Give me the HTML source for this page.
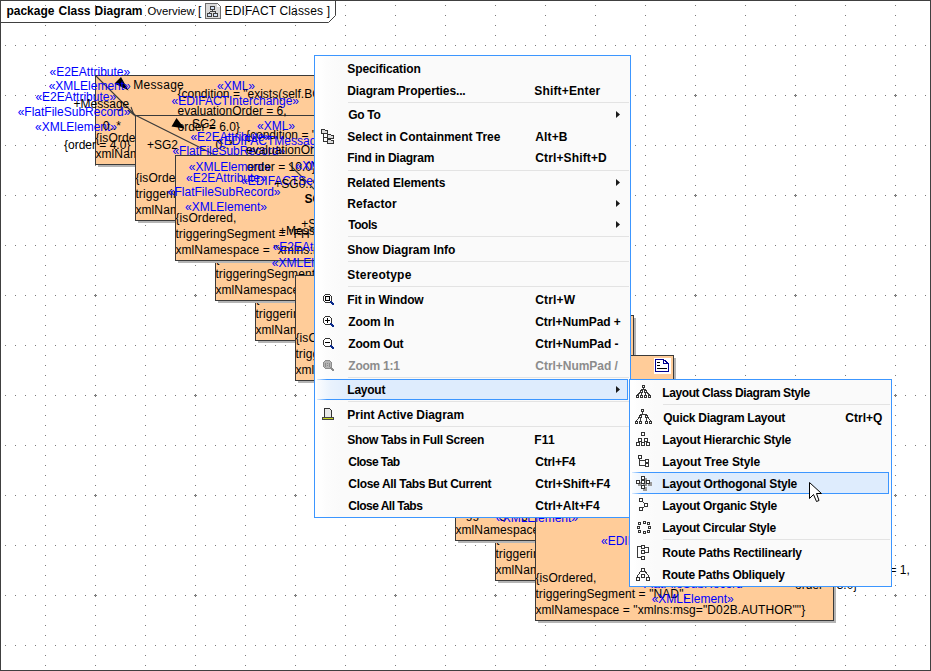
<!DOCTYPE html>
<html><head><meta charset="utf-8"><style>
html,body{margin:0;padding:0;}
body{width:931px;height:671px;position:relative;overflow:hidden;background:#fff;font-family:"Liberation Sans",sans-serif;}
.t{position:absolute;white-space:pre;}
.box{position:absolute;background:#ffcc99;border:1px solid #3a3a3a;box-sizing:border-box;overflow:hidden;}
.sh{position:absolute;background:#b4b4b4;}
.menu{position:absolute;box-sizing:border-box;border:1px solid #3c96ff;background:linear-gradient(to right,#ffffff 0px,#ffffff 3px,#fcfcfc 12px,#fafafa 26px,#fafafa 100%);}
.mi{position:absolute;font-weight:bold;font-size:12px;line-height:12px;color:#000;white-space:pre;}
.sep{position:absolute;height:1px;background:#e3e3e3;}
.hl{position:absolute;box-sizing:border-box;border-right:1px solid #3c96ff;background:linear-gradient(to right,#fbfdff 0px,#e9f2fd 14px,#deecfd 36px,#deecfd 100%);}.hl::before,.hl::after{content:'';position:absolute;left:0;right:-1px;height:1px;background:linear-gradient(to right,rgba(60,150,255,0.15) 0px,#3c96ff 10px,#3c96ff 100%);}.hl::before{top:0}.hl::after{bottom:0}
.arr{position:absolute;width:0;height:0;border-top:4px solid transparent;border-bottom:4px solid transparent;border-left:4px solid #222;}
</style></head><body>

<svg width="931" height="671" style="position:absolute;left:0;top:0" shape-rendering="crispEdges">
<defs>
<pattern id="gv" x="0" y="0" width="50" height="10" patternUnits="userSpaceOnUse"><rect x="45" y="5" width="1" height="1" fill="#7a7a7a"/></pattern>
<pattern id="gh" x="0" y="0" width="10" height="50" patternUnits="userSpaceOnUse"><rect x="5" y="45" width="1" height="1" fill="#7a7a7a"/></pattern>
<pattern id="gc" x="0" y="0" width="100" height="100" patternUnits="userSpaceOnUse"><rect x="94" y="95" width="3" height="1" fill="#7a7a7a"/><rect x="95" y="94" width="1" height="3" fill="#7a7a7a"/></pattern>
</defs>
<rect width="931" height="671" fill="url(#gv)"/>
<rect width="931" height="671" fill="url(#gh)"/>
<rect width="931" height="671" fill="url(#gc)"/>
<rect x="0.5" y="0.5" width="930" height="670" fill="none" stroke="#404040" stroke-width="1"/>
<path d="M0 22.5 H328.5 L335.5 15.5 V0" fill="none" stroke="#404040" stroke-width="1" shape-rendering="auto"/>
</svg>

<div class="t" style="left:6.4px;top:4.64px;font-size:12px;line-height:12px;color:#000;font-weight:bold;">package</div>
<div class="t" style="left:58.5px;top:4.64px;font-size:12px;line-height:12px;color:#000;font-weight:bold;">Class</div>
<div class="t" style="left:94.5px;top:4.64px;font-size:12px;line-height:12px;color:#000;font-weight:bold;">Diagram</div>
<div class="t" style="left:147.5px;top:5.83px;font-size:11.3px;line-height:11.3px;color:#000;">Overview</div>
<div class="t" style="left:198.0px;top:5.24px;font-size:12px;line-height:12px;color:#000;">[</div>
<svg width="17" height="17" style="position:absolute;left:205px;top:3px" shape-rendering="crispEdges">
<path d="M0.5 0.5 H12.5 L15.5 3.5 V15.5 H0.5 Z" fill="#dadada" stroke="#6e6e6e"/>
<path d="M12.5 1 V3.5 H15" fill="#fff" stroke="#fff"/>
<path d="M12.5 0.5 L15.5 3.5" stroke="#6e6e6e" shape-rendering="auto"/>
<path d="M7.5 6.5 V8.5 M4.5 8.5 H10.5 M4.5 8.5 V10.5 M10.5 8.5 V10.5" stroke="#404040"/>
<rect x="5.5" y="3.5" width="4" height="3" fill="#d4e2f6" stroke="#404040"/>
<rect x="2.5" y="10.5" width="4" height="3" fill="#d4e2f6" stroke="#404040"/>
<rect x="8.5" y="10.5" width="4" height="3" fill="#d4e2f6" stroke="#404040"/>
</svg>
<div class="t" style="left:224.5px;top:5.24px;font-size:12px;line-height:12px;color:#000;letter-spacing:0.15px;">EDIFACT Classes ]</div>
<div class="sh" style="left:98px;top:78px;width:298px;height:89px"></div>
<div class="box" style="left:95px;top:75px;width:299px;height:90px"><div class="t" style="left:-0.6px;top:56.04px;font-size:12px;line-height:12px;color:#000;letter-spacing:0.1px;">{isOrdered,</div><div class="t" style="left:-0.6px;top:72.14px;font-size:12px;line-height:12px;color:#000;letter-spacing:0.1px;">xmlNamespace = "xmlns:msg="D02B.AUTHOR""}</div></div>
<div class="sh" style="left:138px;top:118px;width:298px;height:105px"></div>
<div class="box" style="left:135px;top:115px;width:299px;height:106px"><div class="t" style="left:-0.6px;top:56.34px;font-size:12px;line-height:12px;color:#000;letter-spacing:0.1px;">{isOrdered,</div><div class="t" style="left:-0.6px;top:71.84px;font-size:12px;line-height:12px;color:#000;letter-spacing:0.1px;">triggeringSegment = "FH",</div><div class="t" style="left:-0.6px;top:88.04px;font-size:12px;line-height:12px;color:#000;letter-spacing:0.1px;">xmlNamespace = "xmlns:msg="D02B.AUTHOR""}</div></div>
<div class="sh" style="left:258px;top:238px;width:298px;height:105px"></div>
<div class="box" style="left:255px;top:235px;width:299px;height:106px"><div class="t" style="left:-0.6px;top:56.34px;font-size:12px;line-height:12px;color:#000;letter-spacing:0.1px;">{isOrdered,</div><div class="t" style="left:-0.6px;top:71.84px;font-size:12px;line-height:12px;color:#000;letter-spacing:0.1px;">triggeringSegment = "FH",</div><div class="t" style="left:-0.6px;top:88.04px;font-size:12px;line-height:12px;color:#000;letter-spacing:0.1px;">xmlNamespace = "xmlns:msg="D02B.AUTHOR""}</div></div>
<div class="sh" style="left:218px;top:198px;width:298px;height:105px"></div>
<div class="box" style="left:215px;top:195px;width:299px;height:106px"><div class="t" style="left:-0.6px;top:56.34px;font-size:12px;line-height:12px;color:#000;letter-spacing:0.1px;">{isOrdered,</div><div class="t" style="left:-0.6px;top:71.84px;font-size:12px;line-height:12px;color:#000;letter-spacing:0.1px;">triggeringSegment = "FH",</div><div class="t" style="left:-0.6px;top:88.04px;font-size:12px;line-height:12px;color:#000;letter-spacing:0.1px;">xmlNamespace = "xmlns:msg="D02B.AUTHOR""}</div></div>
<div class="sh" style="left:178px;top:158px;width:298px;height:105px"></div>
<div class="box" style="left:175px;top:155px;width:299px;height:106px"><div class="t" style="left:-0.6px;top:56.34px;font-size:12px;line-height:12px;color:#000;letter-spacing:0.1px;">{isOrdered,</div><div class="t" style="left:-0.6px;top:71.84px;font-size:12px;line-height:12px;color:#000;letter-spacing:0.1px;">triggeringSegment = "FH",</div><div class="t" style="left:-0.6px;top:88.04px;font-size:12px;line-height:12px;color:#000;letter-spacing:0.1px;">xmlNamespace = "xmlns:msg="D02B.AUTHOR""}</div></div>
<div class="sh" style="left:298px;top:278px;width:298px;height:105px"></div>
<div class="box" style="left:295px;top:275px;width:299px;height:106px"><div class="t" style="left:-0.6px;top:56.34px;font-size:12px;line-height:12px;color:#000;letter-spacing:0.1px;">{isOrdered,</div><div class="t" style="left:-0.6px;top:71.84px;font-size:12px;line-height:12px;color:#000;letter-spacing:0.1px;">triggeringSegment = "FH",</div><div class="t" style="left:-0.6px;top:88.04px;font-size:12px;line-height:12px;color:#000;letter-spacing:0.1px;">xmlNamespace = "xmlns:msg="D02B.AUTHOR""}</div></div>
<div class="sh" style="left:338px;top:318px;width:298px;height:105px"></div>
<div class="box" style="left:335px;top:315px;width:299px;height:106px"><div class="t" style="left:-0.6px;top:56.34px;font-size:12px;line-height:12px;color:#000;letter-spacing:0.1px;">{isOrdered,</div><div class="t" style="left:-0.6px;top:71.84px;font-size:12px;line-height:12px;color:#000;letter-spacing:0.1px;">triggeringSegment = "FH",</div><div class="t" style="left:-0.6px;top:88.04px;font-size:12px;line-height:12px;color:#000;letter-spacing:0.1px;">xmlNamespace = "xmlns:msg="D02B.AUTHOR""}</div></div>
<div class="sh" style="left:378px;top:358px;width:298px;height:105px"></div>
<div class="box" style="left:375px;top:355px;width:299px;height:106px"><div class="t" style="left:-0.6px;top:56.34px;font-size:12px;line-height:12px;color:#000;letter-spacing:0.1px;">{isOrdered,</div><div class="t" style="left:-0.6px;top:71.84px;font-size:12px;line-height:12px;color:#000;letter-spacing:0.1px;">triggeringSegment = "FH",</div><div class="t" style="left:-0.6px;top:88.04px;font-size:12px;line-height:12px;color:#000;letter-spacing:0.1px;">xmlNamespace = "xmlns:msg="D02B.AUTHOR""}</div></div>
<div class="sh" style="left:418px;top:398px;width:298px;height:105px"></div>
<div class="box" style="left:415px;top:395px;width:299px;height:106px"><div class="t" style="left:-0.6px;top:56.34px;font-size:12px;line-height:12px;color:#000;letter-spacing:0.1px;">{isOrdered,</div><div class="t" style="left:-0.6px;top:71.84px;font-size:12px;line-height:12px;color:#000;letter-spacing:0.1px;">triggeringSegment = "FH",</div><div class="t" style="left:-0.6px;top:88.04px;font-size:12px;line-height:12px;color:#000;letter-spacing:0.1px;">xmlNamespace = "xmlns:msg="D02B.AUTHOR""}</div></div>
<div class="sh" style="left:498px;top:478px;width:298px;height:105px"></div>
<div class="box" style="left:495px;top:475px;width:299px;height:106px"><div class="t" style="left:-0.6px;top:56.34px;font-size:12px;line-height:12px;color:#000;letter-spacing:0.1px;">{isOrdered,</div><div class="t" style="left:-0.6px;top:71.84px;font-size:12px;line-height:12px;color:#000;letter-spacing:0.1px;">triggeringSegment = "FH",</div><div class="t" style="left:-0.6px;top:88.04px;font-size:12px;line-height:12px;color:#000;letter-spacing:0.1px;">xmlNamespace = "xmlns:msg="D02B.AUTHOR""}</div></div>
<div class="sh" style="left:458px;top:438px;width:298px;height:105px"></div>
<div class="box" style="left:455px;top:435px;width:299px;height:106px"><div class="t" style="left:-0.6px;top:56.34px;font-size:12px;line-height:12px;color:#000;letter-spacing:0.1px;">{isOrdered,</div><div class="t" style="left:-0.6px;top:71.84px;font-size:12px;line-height:12px;color:#000;letter-spacing:0.1px;">triggeringSegment = "FH",</div><div class="t" style="left:-0.6px;top:88.04px;font-size:12px;line-height:12px;color:#000;letter-spacing:0.1px;">xmlNamespace = "xmlns:msg="D02B.AUTHOR""}</div></div>
<div class="sh" style="left:538px;top:518px;width:298px;height:105px"></div>
<div class="box" style="left:535px;top:515px;width:299px;height:106px"><div class="t" style="left:-0.6px;top:56.34px;font-size:12px;line-height:12px;color:#000;letter-spacing:0.1px;">{isOrdered,</div><div class="t" style="left:-0.6px;top:72.04px;font-size:12px;line-height:12px;color:#000;letter-spacing:0.1px;">triggeringSegment = "NAD",</div><div class="t" style="left:-0.6px;top:88.04px;font-size:12px;line-height:12px;color:#000;letter-spacing:0.1px;">xmlNamespace = "xmlns:msg="D02B.AUTHOR""}</div></div>
<svg width="931" height="671" style="position:absolute;left:0;top:0">
<path d="M95 75 L135 115 L215 155" fill="none" stroke="#3a3a3a" stroke-width="1.1"/>
<path d="M128 110 L134 115 L131 107" fill="none" stroke="#3a3a3a" stroke-width="1.1"/>
<path d="M289 164 L330 205" fill="none" stroke="#3a3a3a" stroke-width="1.1"/>
<path d="M121 77 L114.5 83.5 L128.5 90.5 Z" fill="#000"/>
<path d="M176.5 118 L171.5 126.5 L184.5 128.5 Z" fill="#000"/>
</svg>
<div class="t" style="left:49.5px;top:65.84px;font-size:12px;line-height:12px;color:#0000ff;">«E2EAttribute»</div>
<div class="t" style="left:48.7px;top:80.34px;font-size:12px;line-height:12px;color:#0000ff;">«XMLElement»</div>
<div class="t" style="left:35.4px;top:91.34px;font-size:12px;line-height:12px;color:#0000ff;">«E2EAttribute»</div>
<div class="t" style="left:73.6px;top:98.34px;font-size:12px;line-height:12px;color:#000;">+Message</div>
<div class="t" style="left:17.7px;top:106.34px;font-size:12px;line-height:12px;color:#0000ff;">«FlatFileSubRecord»</div>
<div class="t" style="left:35.0px;top:120.74px;font-size:12px;line-height:12px;color:#0000ff;">«XMLElement»</div>
<div class="t" style="left:102.8px;top:119.94px;font-size:12px;line-height:12px;color:#000;">0..*</div>
<div class="t" style="left:64.0px;top:138.84px;font-size:12px;line-height:12px;color:#000;">{order = 4.0}</div>
<div class="t" style="left:133.3px;top:78.64px;font-size:12px;line-height:12px;color:#000;letter-spacing:0.3px;">Message</div>
<div class="t" style="left:217.0px;top:80.04px;font-size:12px;line-height:12px;color:#0000ff;">«XML»</div>
<div class="t" style="left:177.5px;top:88.34px;font-size:12px;line-height:12px;color:#000;">{condition = "exists(self.BGM)",</div>
<div class="t" style="left:171.6px;top:95.14px;font-size:12px;line-height:12px;color:#0000ff;">«EDIFACTInterchange»</div>
<div class="t" style="left:177.5px;top:104.54px;font-size:12px;line-height:12px;color:#000;">evaluationOrder = 6,</div>
<div class="t" style="left:192.0px;top:118.34px;font-size:12px;line-height:12px;color:#000;">SG2</div>
<div class="t" style="left:177.5px;top:120.54px;font-size:12px;line-height:12px;color:#000;">order = 6.0}</div>
<div class="t" style="left:257.0px;top:120.24px;font-size:12px;line-height:12px;color:#0000ff;">«XML»</div>
<div class="t" style="left:246.0px;top:129.34px;font-size:12px;line-height:12px;color:#000;">{condition = "exists(self.UNH)",</div>
<div class="t" style="left:190.4px;top:130.74px;font-size:12px;line-height:12px;color:#0000ff;">«E2EAttribute»</div>
<div class="t" style="left:217.0px;top:134.64px;font-size:12px;line-height:12px;color:#0000ff;">«EDIFACTMessage»</div>
<div class="t" style="left:146.9px;top:138.74px;font-size:12px;line-height:12px;color:#000;">+SG2</div>
<div class="t" style="left:215.5px;top:138.54px;font-size:12px;line-height:12px;color:#000;">0..*</div>
<div class="t" style="left:172.4px;top:144.84px;font-size:12px;line-height:12px;color:#0000ff;">«FlatFileSubRecord»</div>
<div class="t" style="left:246.0px;top:144.04px;font-size:12px;line-height:12px;color:#000;">evaluationOrder = 2,</div>
<div class="t" style="left:188.8px;top:160.54px;font-size:12px;line-height:12px;color:#0000ff;">«XMLElement»</div>
<div class="t" style="left:246.8px;top:160.54px;font-size:12px;line-height:12px;color:#000;">order = 10.0}</div>
<div class="t" style="left:295.5px;top:160.34px;font-size:12px;line-height:12px;color:#0000ff;">«XML»</div>
<div class="t" style="left:186.0px;top:171.94px;font-size:12px;line-height:12px;color:#0000ff;">«E2EAttribute»</div>
<div class="t" style="left:241.0px;top:175.04px;font-size:12px;line-height:12px;color:#0000ff;">«EDIFACTSegment, FlatFileSubRecord»</div>
<div class="t" style="left:274.3px;top:178.24px;font-size:12px;line-height:12px;color:#000;">+SG0..*</div>
<div class="t" style="left:167.8px;top:186.34px;font-size:12px;line-height:12px;color:#0000ff;">«FlatFileSubRecord»</div>
<div class="t" style="left:185.0px;top:200.54px;font-size:12px;line-height:12px;color:#0000ff;">«XMLElement»</div>
<div class="t" style="left:301.3px;top:218.34px;font-size:12px;line-height:12px;color:#000;">+SG</div>
<div class="t" style="left:279.0px;top:224.64px;font-size:12px;line-height:12px;color:#000;">+Message</div>
<div class="t" style="left:272.7px;top:241.34px;font-size:12px;line-height:12px;color:#0000ff;">«E2EAttribute»</div>
<div class="t" style="left:271.8px;top:256.94px;font-size:12px;line-height:12px;color:#0000ff;">«XMLElement»</div>
<div class="t" style="left:496.0px;top:512.34px;font-size:12px;line-height:12px;color:#0000ff;">«XMLElement»</div>
<div class="t" style="left:601.0px;top:535.34px;font-size:12px;line-height:12px;color:#0000ff;">«EDIFACTSegment, FlatFileSubRecord»</div>
<div class="t" style="left:636.7px;top:578.34px;font-size:12px;line-height:12px;color:#0000ff;">«FlatFileSubRecord»</div>
<div class="t" style="left:651.7px;top:593.04px;font-size:12px;line-height:12px;color:#0000ff;">«XMLElement»</div>
<div class="t" style="left:795.0px;top:579.34px;font-size:12px;line-height:12px;color:#000;">order = 3.0}</div>
<div class="t" style="left:889.5px;top:564.34px;font-size:12px;line-height:12px;color:#000;">= 1,</div>
<div class="t" style="left:304.6px;top:192.64px;font-size:12px;line-height:12px;color:#000;font-weight:bold;">SG2</div>
<div style="position:absolute;left:654px;top:358px;width:17px;height:16px;background:#fff"></div>
<svg width="17" height="16" style="position:absolute;left:654px;top:358px" shape-rendering="crispEdges">
<path d="M1.5 1.5 H9.5 L14.5 5.5 V13.5 H1.5 Z" fill="#fff" stroke="#000090" stroke-width="1"/>
<path d="M9.5 1.5 V5.5 H14.5" fill="none" stroke="#000090"/>
<path d="M3 4.5 H6 M3 7.5 H6 M3 10.5 H13" stroke="#000" />
</svg>
<div class="menu" style="left:314px;top:55px;width:317px;height:463px"></div>
<div class="hl" style="left:317px;top:379px;width:311px;height:21px"></div>
<div class="sep" style="left:348px;top:102px;width:281px"></div>
<div class="sep" style="left:348px;top:170px;width:281px"></div>
<div class="sep" style="left:348px;top:236px;width:281px"></div>
<div class="sep" style="left:348px;top:261px;width:281px"></div>
<div class="sep" style="left:348px;top:286px;width:281px"></div>
<div class="sep" style="left:348px;top:377px;width:281px"></div>
<div class="sep" style="left:348px;top:401px;width:281px"></div>
<div class="sep" style="left:348px;top:426px;width:281px"></div>
<div class="mi" style="left:347.30px;top:62.84px;color:#000;letter-spacing:-0.100px">Specification</div>
<div class="mi" style="left:347.30px;top:84.84px;color:#000;letter-spacing:-0.115px">Diagram Properties...</div>
<div class="mi" style="left:534.30px;top:84.84px;color:#000;letter-spacing:0.160px">Shift+Enter</div>
<div class="mi" style="left:348.30px;top:108.84px;color:#000;letter-spacing:-0.325px">Go To</div>
<svg width="6" height="9" style="position:absolute;left:615px;top:110px"><path d="M1 1 V8 L5 4.5 Z" fill="#1a1a1a"/></svg>
<div class="mi" style="left:347.30px;top:130.84px;color:#000;letter-spacing:-0.040px">Select in Containment Tree</div>
<div class="mi" style="left:535.30px;top:130.84px;color:#000;letter-spacing:0.125px">Alt+B</div>
<div class="mi" style="left:347.30px;top:152.34px;color:#000;letter-spacing:-0.257px">Find in Diagram</div>
<div class="mi" style="left:535.30px;top:152.34px;color:#000;letter-spacing:0.127px">Ctrl+Shift+D</div>
<div class="mi" style="left:347.30px;top:176.84px;color:#000;letter-spacing:-0.133px">Related Elements</div>
<svg width="6" height="9" style="position:absolute;left:615px;top:178px"><path d="M1 1 V8 L5 4.5 Z" fill="#1a1a1a"/></svg>
<div class="mi" style="left:347.30px;top:197.84px;color:#000;letter-spacing:0.086px">Refactor</div>
<svg width="6" height="9" style="position:absolute;left:615px;top:199px"><path d="M1 1 V8 L5 4.5 Z" fill="#1a1a1a"/></svg>
<div class="mi" style="left:348.30px;top:218.84px;color:#000;letter-spacing:-0.500px">Tools</div>
<svg width="6" height="9" style="position:absolute;left:615px;top:220px"><path d="M1 1 V8 L5 4.5 Z" fill="#1a1a1a"/></svg>
<div class="mi" style="left:347.30px;top:243.84px;color:#000;letter-spacing:-0.044px">Show Diagram Info</div>
<div class="mi" style="left:347.30px;top:268.84px;color:#000;letter-spacing:0.222px">Stereotype</div>
<div class="mi" style="left:347.30px;top:293.84px;color:#000;letter-spacing:-0.125px">Fit in Window</div>
<div class="mi" style="left:535.30px;top:293.84px;color:#000;letter-spacing:0.140px">Ctrl+W</div>
<div class="mi" style="left:348.30px;top:315.84px;color:#000;letter-spacing:-0.100px">Zoom In</div>
<div class="mi" style="left:535.30px;top:315.84px;color:#000;letter-spacing:-0.100px">Ctrl+NumPad +</div>
<div class="mi" style="left:348.30px;top:337.84px;color:#000;letter-spacing:-0.200px">Zoom Out</div>
<div class="mi" style="left:535.30px;top:337.84px;color:#000;letter-spacing:-0.033px">Ctrl+NumPad -</div>
<div class="mi" style="left:348.30px;top:359.84px;color:#8c8c8c;letter-spacing:-0.243px">Zoom 1:1</div>
<div class="mi" style="left:535.30px;top:359.84px;color:#8c8c8c;letter-spacing:-0.033px">Ctrl+NumPad /</div>
<div class="mi" style="left:347.30px;top:383.84px;color:#000;letter-spacing:-0.240px">Layout</div>
<svg width="6" height="9" style="position:absolute;left:615px;top:385px"><path d="M1 1 V8 L5 4.5 Z" fill="#1a1a1a"/></svg>
<div class="mi" style="left:347.30px;top:408.84px;color:#000;letter-spacing:-0.042px">Print Active Diagram</div>
<div class="mi" style="left:347.30px;top:433.84px;color:#000;letter-spacing:-0.326px">Show Tabs in Full Screen</div>
<div class="mi" style="left:534.30px;top:433.84px;color:#000;letter-spacing:0.200px">F11</div>
<div class="mi" style="left:348.30px;top:455.84px;color:#000;letter-spacing:-0.587px">Close Tab</div>
<div class="mi" style="left:535.30px;top:455.84px;color:#000;letter-spacing:-0.267px">Ctrl+F4</div>
<div class="mi" style="left:348.30px;top:477.84px;color:#000;letter-spacing:-0.324px">Close All Tabs But Current</div>
<div class="mi" style="left:535.30px;top:477.84px;color:#000;letter-spacing:-0.042px">Ctrl+Shift+F4</div>
<div class="mi" style="left:348.30px;top:499.84px;color:#000;letter-spacing:-0.523px">Close All Tabs</div>
<div class="mi" style="left:535.30px;top:499.84px;color:#000;letter-spacing:-0.040px">Ctrl+Alt+F4</div>
<div class="menu" style="left:629px;top:379px;width:263px;height:208px"></div>
<div class="hl" style="left:632px;top:472px;width:257px;height:22px"></div>
<div class="sep" style="left:663px;top:404px;width:227px"></div>
<div class="sep" style="left:663px;top:539px;width:227px"></div>
<div class="mi" style="left:662.30px;top:386.84px;color:#000;letter-spacing:-0.408px">Layout Class Diagram Style</div>
<div class="mi" style="left:663.30px;top:411.84px;color:#000;letter-spacing:-0.284px">Quick Diagram Layout</div>
<div class="mi" style="left:845.30px;top:411.84px;color:#000;letter-spacing:0.000px">Ctrl+Q</div>
<div class="mi" style="left:662.30px;top:433.84px;color:#000;letter-spacing:-0.200px">Layout Hierarchic Style</div>
<div class="mi" style="left:662.30px;top:455.84px;color:#000;letter-spacing:-0.087px">Layout Tree Style</div>
<div class="mi" style="left:662.30px;top:477.84px;color:#000;letter-spacing:-0.200px">Layout Orthogonal Style</div>
<div class="mi" style="left:662.30px;top:499.84px;color:#000;letter-spacing:-0.274px">Layout Organic Style</div>
<div class="mi" style="left:662.30px;top:521.84px;color:#000;letter-spacing:-0.310px">Layout Circular Style</div>
<div class="mi" style="left:662.30px;top:546.84px;color:#000;letter-spacing:-0.208px">Route Paths Rectilinearly</div>
<div class="mi" style="left:662.30px;top:568.84px;color:#000;letter-spacing:-0.265px">Route Paths Obliquely</div>
<svg width="931" height="671" style="position:absolute;left:0;top:0" shape-rendering="crispEdges"><path d="M321.5 129.5 H324.5 L325.5 130.5 H327.5 V133.5 H321.5 Z" fill="#ddd" stroke="#333"/><path d="M323.5 133.5 V141.5 H327.5 M323.5 137.5 H327.5" fill="none" stroke="#333"/><path d="M327.5 134.5 H330.5 L331.5 135.5 H333.5 V138.5 H327.5 Z" fill="#ddd" stroke="#333"/><path d="M327.5 139.5 H330.5 L331.5 140.5 H333.5 V143.5 H327.5 Z" fill="#ddd" stroke="#333"/><path d="M325.5 294.5 H329.5 L331.5 296.5 V300.5 L329.5 302.5 H325.5 L323.5 300.5 V296.5 Z" fill="#fff" stroke="#333"/><path d="M330.5 301.5 L334 305" stroke="#0a2a8a" stroke-width="1.6"/><rect x="325.5" y="296.5" width="4" height="4" fill="#eee" stroke="#000"/><path d="M325.5 316.5 H329.5 L331.5 318.5 V322.5 L329.5 324.5 H325.5 L323.5 322.5 V318.5 Z" fill="#fff" stroke="#333"/><path d="M330.5 323.5 L334 327" stroke="#0a2a8a" stroke-width="1.6"/><path d="M325 320.5 H330 M327.5 318 V323" stroke="#000"/><path d="M325.5 338.5 H329.5 L331.5 340.5 V344.5 L329.5 346.5 H325.5 L323.5 344.5 V340.5 Z" fill="#fff" stroke="#333"/><path d="M330.5 345.5 L334 349" stroke="#0a2a8a" stroke-width="1.6"/><path d="M325 342.5 H330" stroke="#000" stroke-width="1.2"/><path d="M325.5 360.5 H329.5 L331.5 362.5 V366.5 L329.5 368.5 H325.5 L323.5 366.5 V362.5 Z" fill="#b4b4b4" stroke="#8c8c8c"/><path d="M330.5 367.5 L334 371" stroke="#8c8c8c" stroke-width="1.6"/><path d="M325.5 363 V367 M329.5 363 V367" stroke="#8c8c8c"/><rect x="327" y="363" width="1" height="1" fill="#8c8c8c"/><rect x="327" y="365" width="1" height="1" fill="#8c8c8c"/><path d="M324.5 408.5 H329.5 L331.5 410.5 V417.5 H324.5 Z" fill="#e8e8e8" stroke="#333"/><path d="M322.5 417.5 H333.5 V419.5 H322.5 Z" fill="#c8d820" stroke="#444"/><rect x="642.5" y="385.5" width="2" height="2" fill="#fff" stroke="#333"/><rect x="640.5" y="390.5" width="2" height="2" fill="#fff" stroke="#333"/><rect x="644.5" y="390.5" width="2" height="2" fill="#fff" stroke="#333"/><rect x="636.5" y="395.5" width="2" height="2" fill="#fff" stroke="#333"/><rect x="640.5" y="395.5" width="2" height="2" fill="#fff" stroke="#333"/><rect x="644.5" y="395.5" width="2" height="2" fill="#fff" stroke="#333"/><rect x="648.5" y="395.5" width="2" height="2" fill="#fff" stroke="#333"/><path d="M643.5 388 V389.5 H641.5 V390 M643.5 389.5 H645.5 V390 M641.5 393 V395 M645.5 393 V395 M640 392.5 L637.5 395 M647 392.5 L649.5 395" fill="none" stroke="#3a3a3a"/><rect x="641.5" y="409.5" width="2" height="2" fill="#fff" stroke="#333"/><rect x="639.5" y="415.5" width="2" height="2" fill="#fff" stroke="#333"/><rect x="645.5" y="415.5" width="2" height="2" fill="#fff" stroke="#333"/><rect x="635.5" y="421.5" width="2" height="2" fill="#fff" stroke="#333"/><rect x="639.5" y="421.5" width="2" height="2" fill="#fff" stroke="#333"/><rect x="645.5" y="421.5" width="2" height="2" fill="#fff" stroke="#333"/><rect x="649.5" y="421.5" width="2" height="2" fill="#fff" stroke="#333"/><path d="M642.5 412 V414 H640.5 V415 M642.5 414 H646.5 V415 M640.5 418 V421 M646.5 418 V421 M639 417.5 L636.5 421 M648 417.5 L650.5 421" fill="none" stroke="#3a3a3a"/><rect x="641.5" y="432.5" width="3" height="3" fill="#fff" stroke="#333"/><rect x="638.5" y="438.5" width="3" height="3" fill="#fff" stroke="#333"/><rect x="644.5" y="438.5" width="3" height="3" fill="#fff" stroke="#333"/><rect x="636.5" y="442.5" width="3" height="3" fill="#fff" stroke="#333"/><rect x="641.5" y="442.5" width="3" height="3" fill="#fff" stroke="#333"/><rect x="646.5" y="442.5" width="3" height="3" fill="#fff" stroke="#333"/><rect x="638.5" y="455.5" width="3" height="3" fill="#fff" stroke="#333"/><rect x="645.5" y="459.5" width="3" height="3" fill="#fff" stroke="#333"/><rect x="645.5" y="463.5" width="3" height="3" fill="#fff" stroke="#333"/><path d="M639.5 459 V465.5 H645 M639.5 460.5 H645" fill="none" stroke="#3a3a3a"/><rect x="643" y="478" width="4" height="4" fill="#999"/><rect x="638" y="482" width="4" height="4" fill="#999"/><rect x="643" y="482" width="4" height="4" fill="#999"/><rect x="648" y="482" width="4" height="4" fill="#999"/><rect x="643" y="487" width="4" height="4" fill="#999"/><rect x="641.5" y="476.5" width="3" height="3" fill="#fff" stroke="#333"/><rect x="636.5" y="480.5" width="3" height="3" fill="#fff" stroke="#333"/><rect x="641.5" y="480.5" width="3" height="3" fill="#fff" stroke="#333"/><rect x="646.5" y="480.5" width="3" height="3" fill="#fff" stroke="#333"/><rect x="641.5" y="485.5" width="3" height="3" fill="#fff" stroke="#333"/><rect x="639.5" y="498.5" width="3" height="3" fill="#fff" stroke="#333"/><rect x="644.5" y="503.5" width="3" height="3" fill="#fff" stroke="#333"/><rect x="639.5" y="507.5" width="3" height="3" fill="#fff" stroke="#333"/><path d="M642.5 501.5 L644.5 503.5 M644.5 506.5 L642.5 508" fill="none" stroke="#3a3a3a"/><rect x="643.5" y="521.5" width="2" height="2" fill="#fff" stroke="#333"/><rect x="638.5" y="522.5" width="2" height="2" fill="#fff" stroke="#333"/><rect x="647.5" y="522.5" width="2" height="2" fill="#fff" stroke="#333"/><rect x="637.5" y="526.5" width="2" height="2" fill="#fff" stroke="#333"/><rect x="648.5" y="526.5" width="2" height="2" fill="#fff" stroke="#333"/><rect x="638.5" y="530.5" width="2" height="2" fill="#fff" stroke="#333"/><rect x="643.5" y="531.5" width="2" height="2" fill="#fff" stroke="#333"/><rect x="647.5" y="530.5" width="2" height="2" fill="#fff" stroke="#333"/><path d="M641 546.5 H637.5 V557.5 H641 M644 547.5 H648.5 V552.5 H644" fill="none" stroke="#3a3a3a"/><rect x="641.5" y="545.5" width="3" height="3" fill="#fff" stroke="#333"/><rect x="641.5" y="550.5" width="3" height="3" fill="#fff" stroke="#333"/><rect x="641.5" y="556.5" width="3" height="3" fill="#fff" stroke="#333"/><path d="M641 571 L637 576.5 M645 571 L649 576.5" fill="none" stroke="#3a3a3a"/><rect x="641.5" y="568.5" width="3" height="3" fill="#fff" stroke="#333"/><rect x="641.5" y="574.5" width="3" height="3" fill="#fff" stroke="#333"/><rect x="636.5" y="577.5" width="3" height="3" fill="#fff" stroke="#333"/><rect x="646.5" y="577.5" width="3" height="3" fill="#fff" stroke="#333"/></svg>
<svg width="14" height="22" style="position:absolute;left:809px;top:482px">
<path d="M0.5 0.5 L0.5 16.5 L4.5 12.5 L7.5 19.5 L10 18.5 L7.5 11.5 L12.5 11.5 Z" fill="#fff" stroke="#000" stroke-width="1" stroke-linejoin="miter"/>
</svg>
</body></html>
